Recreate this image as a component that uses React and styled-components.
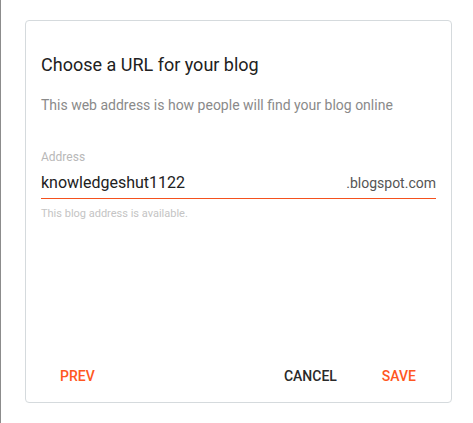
import React from 'react';
import styled, { createGlobalStyle } from 'styled-components';

const GlobalStyle = createGlobalStyle`
  html, body {
    margin: 0;
    padding: 0;
    background: #fff;
  }
  body {
    font-family: Roboto, 'Noto Sans', Arial, sans-serif;
    border-left: 1px solid #8c8c8c;
    min-height: 423px;
    box-sizing: border-box;
  }
`;

export default function App() {
  return (
    <>
      <GlobalStyle />
      <Page>
        <Card>
          <Title>Choose a URL for your blog</Title>
          <Subtitle>
            This web address is how people will find your blog online
          </Subtitle>
          <Field>
            <Label>Address</Label>
            <InputRow>
              <Value>knowledgeshut1122</Value>
              <Suffix>.blogspot.com</Suffix>
            </InputRow>
            <Helper>This blog address is available.</Helper>
          </Field>
          <Actions>
            <Button $accent>Prev</Button>
            <Spacer />
            <Button>Cancel</Button>
            <Button $accent>Save</Button>
          </Actions>
        </Card>
      </Page>
    </>
  );
}

const Page = styled.div`
  padding: 20px 0 0 24px;
`;

const Card = styled.div`
  box-sizing: border-box;
  width: 427px;
  height: 383px;
  border: 1px solid #d5dadd;
  border-radius: 4px;
  padding: 32px 15px 0;
  display: flex;
  flex-direction: column;
`;

const Title = styled.h2`
  margin: 0;
  font-size: 18px;
  font-weight: 400;
  line-height: 24px;
  color: #212121;
`;

const Subtitle = styled.p`
  margin: 18px 0 0;
  font-size: 14px;
  line-height: 20px;
  color: #8a8a8a;
`;

const Field = styled.div`
  margin-top: 34px;
  display: flex;
  flex-direction: column;
`;

const Label = styled.div`
  font-size: 12px;
  line-height: 16px;
  color: #b8b8b8;
`;

const InputRow = styled.div`
  display: flex;
  align-items: baseline;
  justify-content: space-between;
  margin-top: 7px;
  padding-bottom: 4px;
  border-bottom: 1px solid #f4511e;
`;

const Value = styled.span`
  font-size: 16px;
  line-height: 22px;
  color: #212121;
`;

const Suffix = styled.span`
  font-size: 14px;
  color: #555;
`;

const Helper = styled.div`
  margin-top: 8px;
  font-size: 11px;
  line-height: 14px;
  color: #c4c4c4;
`;

const Actions = styled.div`
  margin-top: auto;
  margin-bottom: 8px;
  display: flex;
  align-items: center;
  gap: 0;
  padding-right: 1px;
`;

const Spacer = styled.div`
  flex: 1;
`;

const Button = styled.button`
  background: none;
  border: none;
  font-family: inherit;
  font-size: 14px;
  font-weight: 500;
  text-transform: uppercase;
  padding: 0 19px;
  height: 36px;
  line-height: 36px;
  color: ${p => (p.$accent ? '#ff5722' : '#2a2a2a')};
  cursor: pointer;
  & + & {
    margin-left: 7px;
  }
`;
